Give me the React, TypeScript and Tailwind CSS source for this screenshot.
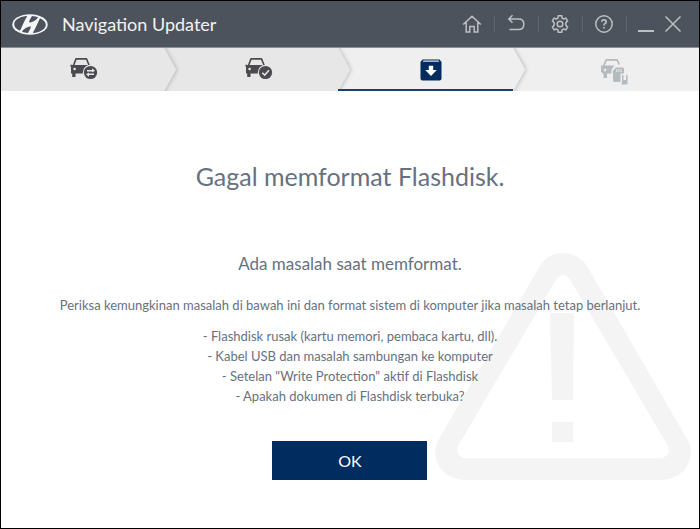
import type { ReactNode } from "react";

const problems = [
  "- Flashdisk rusak (kartu memori, pembaca kartu, dll).",
  "- Kabel USB dan masalah sambungan ke komputer",
  '- Setelan "Write Protection" aktif di Flashdisk',
  "- Apakah dokumen di Flashdisk terbuka?",
];

function Logo() {
  return (
    <svg width="36" height="21" viewBox="0 0 36 21" aria-hidden="true">
      <ellipse cx="18" cy="10.5" rx="17.7" ry="10.2" fill="#f4f5f6" />
      <path
        d="M14 2C7.200 2.800 2.200 6.200 2.200 10.200C2.200 12.700 4 14.800 7 16.300C7.800 16.700 8.300 16.400 8.700 15.600C10 12.800 11.600 8.300 14.700 3.100C15.200 2.300 15 1.900 14 2Z"
        fill="#4d535d"
      />
      <path
        d="M22 19C28.800 18.200 33.800 14.800 33.800 10.800C33.800 8.300 32 6.200 29 4.700C28.200 4.300 27.700 4.600 27.300 5.400C26 8.200 24.400 12.700 21.300 17.900C20.800 18.700 21 19.100 22 19Z"
        fill="#4d535d"
      />
      <path
        d="M20 2C18.700 4.200 17.500 6.200 17.200 7.400C17 8.300 17.500 8.700 18.500 8.500C21.300 7.900 24.200 6.100 26.100 3.500C24.200 2.500 22.200 2.100 20 2Z"
        fill="#4d535d"
      />
      <path
        d="M16 19C17.300 16.800 18.500 14.800 18.800 13.600C19 12.700 18.500 12.300 17.500 12.500C14.700 13.100 11.800 14.900 9.900 17.500C11.800 18.500 13.800 18.900 16 19Z"
        fill="#4d535d"
      />
    </svg>
  );
}

function Car({ children }: { children: ReactNode }) {
  return (
    <svg
      width="28"
      height="26"
      viewBox="0 0 28 26"
      fill="currentColor"
      aria-hidden="true"
    >
      <path
        d="M3.500 8.500L6 1.900H16.500L19.200 8.500"
        fill="none"
        stroke="currentColor"
        strokeWidth="1.600"
        strokeLinejoin="round"
      />
      <path d="M2.500 8H20.500L22 10V16.500H5.500V20H2.200V16.500H1V10L0.500 9.500V7.500Z" />
      <circle cx="4.600" cy="12" r="1.300" fill="#e7e7e7" />
      <circle cx="20.500" cy="15.500" r="7.700" fill="#e7e7e7" />
      <circle cx="20.500" cy="15.500" r="6.600" />
      {children}
    </svg>
  );
}

function CarTransferIcon() {
  return (
    <Car>
      <path
        d="M17 13.800H22.500M24 17.300H18.500"
        fill="none"
        stroke="#e7e7e7"
        strokeWidth="1.400"
      />
      <path d="M22 11.300L25 13.800L22 15.500Z" fill="#e7e7e7" />
      <path d="M19 19.800L16 17.300L19 15.500Z" fill="#e7e7e7" />
    </Car>
  );
}

function CarCheckIcon() {
  return (
    <Car>
      <path
        d="M17.300 15.700L19.700 18.100L24 13.200"
        fill="none"
        stroke="#e7e7e7"
        strokeWidth="1.500"
      />
    </Car>
  );
}

function DownloadBoxIcon() {
  return (
    <svg width="22" height="22" viewBox="0 0 22 22" aria-hidden="true">
      <path
        d="M2.500 0.500H19.500L21.500 3V19.500Q21.500 21.500 19.500 21.500H2.500Q0.500 21.500 0.500 19.500V3Z"
        fill="#002c5f"
      />
      <path d="M3.500 1.500H18.500L19.300 2.700H2.700Z" fill="#dfe4ea" />
      <path d="M8.800 6.800H13.200V11H16.800L11 17L5.200 11H8.800Z" fill="#ffffff" />
    </svg>
  );
}

function CarCardIcon() {
  return (
    <svg
      width="28"
      height="27"
      viewBox="0 0 28 27"
      fill="#b5babf"
      aria-hidden="true"
    >
      <path
        d="M3.500 8.500L6.300 1.900H17L19.300 6.500"
        fill="none"
        stroke="#b5babf"
        strokeWidth="1.600"
      />
      <path d="M1 7.500H14.500L11.500 11.500V15.500H7V20H3.500V16L1 14Z" />
      <circle cx="5" cy="12" r="1.300" fill="#efefef" />
      <path d="M16 9.500H22.500Q24 9.500 24 11V15.500H20.500V24H14.500Q13 24 13 22.500V12.500Z" />
      <path
        d="M16.700 11V14M18.900 11V14M21.100 11V14"
        stroke="#efefef"
        strokeWidth="0.900"
      />
      <path d="M22 17H23.500V22H26V17H27.500V25.500Q27.500 26.500 26.500 26.500H21.500V24.500H22Z" />
    </svg>
  );
}

function Chevron({ from, to }: { from: string; to: string }) {
  return (
    <svg
      className="absolute inset-y-0 -right-3 z-10 h-full w-6"
      viewBox="0 0 24 43"
      preserveAspectRatio="none"
      aria-hidden="true"
    >
      <defs>
        <filter id="edge" x="-50%" y="-20%" width="220%" height="140%">
          <feDropShadow dx="1" dy="0" stdDeviation="2.200" floodOpacity="0.240" />
        </filter>
      </defs>
      <path d="M0 0H24V43H0Z" fill={to} />
      <path
        d="M-6 -6H-3L0 0L12 21.500L0 43L-3 49H-6Z"
        fill={from}
        filter="url(#edge)"
      />
    </svg>
  );
}

function WarningMark() {
  return (
    <svg
      className="pointer-events-none absolute right-2 bottom-12"
      width="256"
      height="227"
      viewBox="0 0 256 227"
      aria-hidden="true"
    >
      <path
        fillRule="evenodd"
        d="M105 13Q113 0 128 0Q143 0 152 13L251 184Q256 191 256 199Q254 224 228 227H29Q2 224 0 199Q0 192 5 184ZM122 25L23 193Q20 201 28 205H228Q236 201 233 193L134 25Q128 19 122 25Z"
        fill="#f4f4f4"
      />
      <path d="M115 60H139L138 147H117ZM117 169H138V189H117Z" fill="#f4f4f4" />
    </svg>
  );
}

function TitleButton({
  label,
  width = "w-5",
  children,
}: {
  label: string;
  width?: string;
  children: ReactNode;
}) {
  return (
    <button
      type="button"
      aria-label={label}
      className={`flex h-5 cursor-pointer items-center justify-center ${width}`}
    >
      <svg
        className="shrink-0"
        width="20"
        height="20"
        viewBox="0 0 20 20"
        fill="none"
        stroke="currentColor"
        strokeWidth="1.500"
        aria-hidden="true"
      >
        {children}
      </svg>
    </button>
  );
}

function Divider() {
  return <span className="mr-[11px] ml-3 h-4 w-px bg-[#60666f]" />;
}

function TitleBar() {
  return (
    <header className="flex h-[47px] items-center border-b border-[#8b8f9b] bg-[#4d535d] pr-4 pl-[11px]">
      <Logo />
      <h1 className="ml-[14px] flex-1 text-lg text-[#f1f2f3]">
        Navigation Updater
      </h1>
      <div className="flex items-center text-[#bcbfc3]">
        <TitleButton label="Home">
          <path d="M1.200 10.500L10 2.200L18.800 10.500M4.200 8.500V18H7.800V12.500H12.200V18H15.800V8.500" />
        </TitleButton>
        <Divider />
        <TitleButton label="Back">
          <path d="M6.500 1.300L2.800 5L6.500 8.700M2.800 5H12.500Q17.800 5 17.800 10.200Q17.800 15.500 12.500 15.500H3.500" />
        </TitleButton>
        <Divider />
        <TitleButton label="Settings">
          <path d="M8.300 1.800H11.700L12.200 4.200L13.600 5L15.900 4.200L17.600 7.100L15.800 8.800V11.200L17.600 12.900L15.900 15.800L13.600 15L12.200 15.800L11.700 18.200H8.300L7.800 15.800L6.400 15L4.100 15.800L2.400 12.900L4.200 11.200V8.800L2.400 7.100L4.100 4.200L6.400 5L7.800 4.200Z" />
          <circle cx="10" cy="10" r="2.800" />
        </TitleButton>
        <Divider />
        <TitleButton label="Help">
          <circle cx="10" cy="10" r="8.200" />
          <path
            d="M7.800 7.800Q7.900 5.900 10 5.900Q12.200 5.900 12.200 7.700Q12.200 8.800 11.100 9.500Q10 10.200 10 11.600M10 12.900V14.600"
            strokeWidth="1.700"
          />
        </TitleButton>
        <Divider />
        <div className="flex items-center gap-[9px]">
          <TitleButton label="Minimize" width="w-4">
            <path d="M2 17H18" strokeWidth="2" />
          </TitleButton>
          <TitleButton label="Close">
            <path d="M2.500 2.500L17.500 17.500M17.500 2.500L2.500 17.500" />
          </TitleButton>
        </div>
      </div>
    </header>
  );
}

function Steps() {
  return (
    <ol className="grid h-[43px] grid-cols-4 text-[#4a4a50]">
      <li className="relative flex items-center justify-center bg-[#e7e7e7] pr-2">
        <CarTransferIcon />
        <Chevron from="#e7e7e7" to="#e7e7e7" />
      </li>
      <li className="relative flex items-center justify-center bg-[#e7e7e7] pr-2">
        <CarCheckIcon />
        <Chevron from="#e7e7e7" to="#efefef" />
      </li>
      <li
        aria-current="step"
        className="relative flex items-center justify-center bg-[#efefef] pr-3"
      >
        <DownloadBoxIcon />
        <Chevron from="#efefef" to="#efefef" />
        <span className="absolute right-3 bottom-0 -left-3 z-20 h-[2px] bg-[#1c4070]" />
      </li>
      <li className="flex items-center justify-center bg-[#efefef] pt-1 pl-1">
        <CarCardIcon />
      </li>
    </ol>
  );
}

export default function App() {
  return (
    <div className="flex min-h-screen flex-col border border-black bg-white font-['Lato',sans-serif] text-[#667180]">
      <TitleBar />
      <Steps />
      <main className="relative flex flex-1 flex-col items-center px-4 pt-[69px] text-center">
        <WarningMark />
        <div className="relative flex flex-col items-center">
          <h2 className="text-[25px] leading-8">Gagal memformat Flashdisk.</h2>
          <p className="mt-[60px] text-[17px] leading-6">
            Ada masalah saat memformat.
          </p>
          <p className="mt-[19px] text-[13px] leading-5">
            Periksa kemungkinan masalah di bawah ini dan format sistem di
            komputer jika masalah tetap berlanjut.
          </p>
          <ul className="mt-[11px] text-[13px] leading-5">
            {problems.map((problem) => (
              <li key={problem}>{problem}</li>
            ))}
          </ul>
          <button
            type="button"
            className="mt-[35px] h-[39px] w-[155px] cursor-pointer bg-[#002c5f] text-base leading-5 text-white"
          >
            OK
          </button>
        </div>
      </main>
    </div>
  );
}
